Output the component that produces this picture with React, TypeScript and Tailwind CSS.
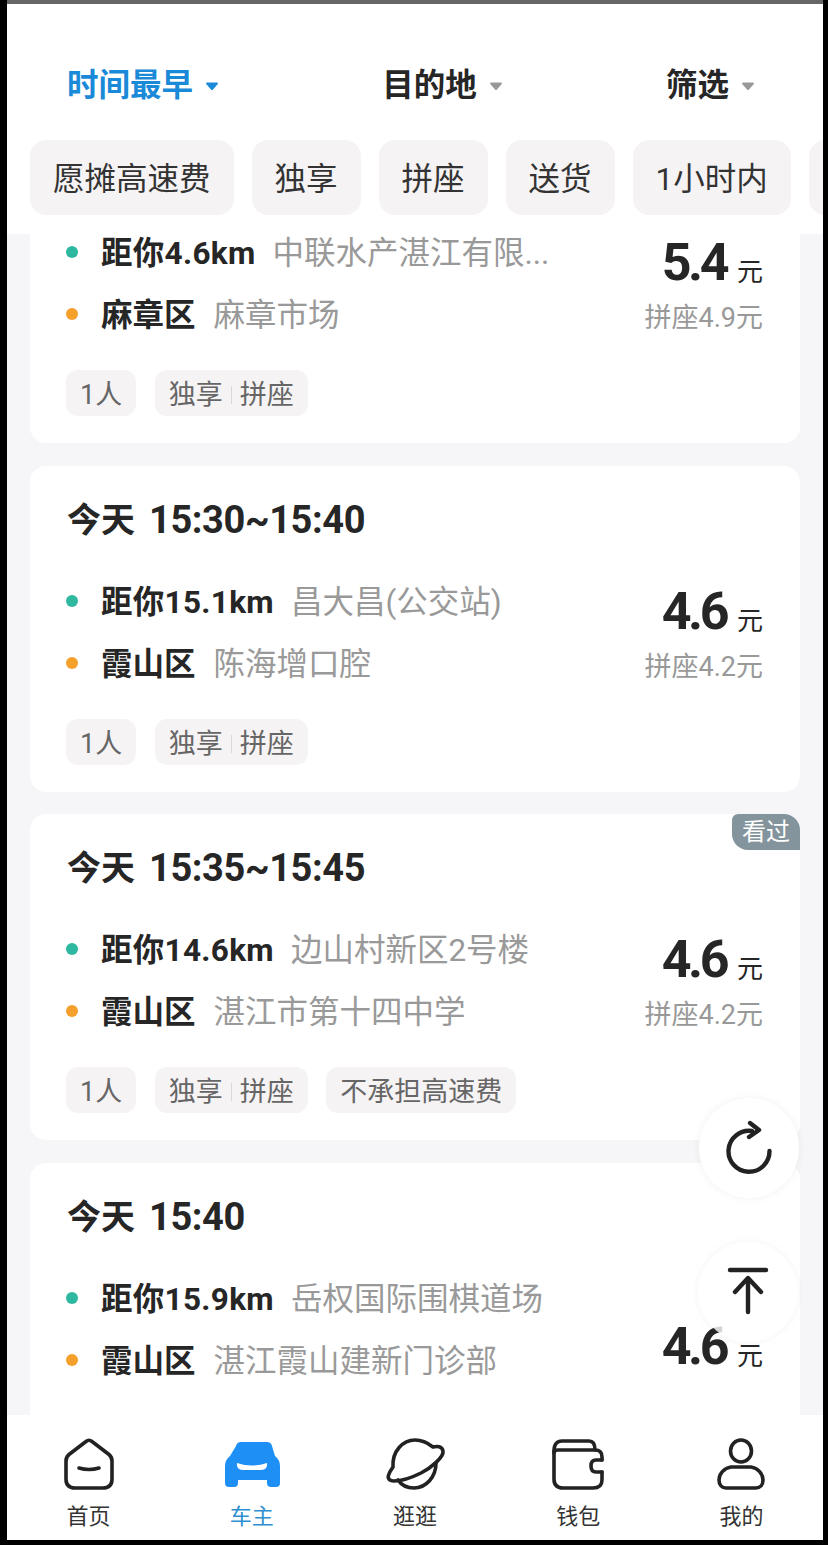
import type { ReactNode } from "react";

const font = "font-[Roboto,'Noto_Sans_CJK_SC',sans-serif]";

type Order = {
  id: number;
  clock?: string;
  distance: string;
  from: string;
  district: string;
  to: string;
  price: string;
  share?: string;
  seen?: boolean;
  extra?: string;
};

// the first card is scrolled under the header, so its time row is out of view
const orders: Order[] = [
  {
    id: 1,
    distance: "距你4.6km",
    from: "中联水产湛江有限...",
    district: "麻章区",
    to: "麻章市场",
    price: "5.4",
    share: "拼座4.9元",
  },
  {
    id: 2,
    clock: "15:30~15:40",
    distance: "距你15.1km",
    from: "昌大昌(公交站)",
    district: "霞山区",
    to: "陈海增口腔",
    price: "4.6",
    share: "拼座4.2元",
  },
  {
    id: 3,
    clock: "15:35~15:45",
    distance: "距你14.6km",
    from: "边山村新区2号楼",
    district: "霞山区",
    to: "湛江市第十四中学",
    price: "4.6",
    share: "拼座4.2元",
    seen: true,
    extra: "不承担高速费",
  },
  {
    id: 4,
    clock: "15:40",
    distance: "距你15.9km",
    from: "岳权国际围棋道场",
    district: "霞山区",
    to: "湛江霞山建新门诊部",
    price: "4.6",
  },
];

function Triangle({ className }: { className: string }) {
  return (
    <svg width="14" height="10" viewBox="0 0 14 10" className={className}>
      <path d="M2 1.5 H12 Q13.5 1.5 12.8 3 L8 8.5 Q7 9.5 6 8.5 L1.2 3 Q0.5 1.5 2 1.5Z" fill="currentColor" />
    </svg>
  );
}

function Tag({ children }: { children: ReactNode }) {
  return (
    <span className="flex h-[46px] items-center rounded-[12px] bg-[#f6f3f5] px-[14px] pt-[4px] text-[27px] leading-[34px] text-[#666666]">
      {children}
    </span>
  );
}

function OrderCard({ order }: { order: Order }) {
  return (
    <article className="relative h-[326px] shrink-0 overflow-hidden rounded-[16px] bg-white">
      {order.seen ? (
        <span className="absolute right-0 top-0 flex h-[36px] w-[68px] items-center justify-center rounded-bl-[16px] rounded-tl-[6px] bg-[#84949c] text-[24px] leading-[30px] text-white">
          看过
        </span>
      ) : null}
      <h2 className="mt-[34px] flex h-[40px] items-center pl-[37px] font-bold text-[#262626]">
        {order.clock ? (
          <>
            <span className="text-[34px] leading-[40px]">今天</span>
            <span className="ml-[14px] text-[38px] leading-[40px] tracking-[-0.4px]">{order.clock}</span>
          </>
        ) : null}
      </h2>
      <div className="mt-[30px] flex justify-between pr-[37px]">
        <div>
          <div className="flex h-[62px] items-center pl-[36px]">
            <span className="mr-[23px] h-[12px] w-[12px] rounded-full bg-[#2fb8a0]" />
            <span className="pt-[4px] text-[31.5px] font-bold leading-[46px] tracking-[0.3px] text-[#262626]">{order.distance}</span>
            <span className="ml-[17px] pt-[4px] text-[31.5px] leading-[46px] text-[#999999]">{order.from}</span>
          </div>
          <div className="flex h-[62px] items-center pl-[36px]">
            <span className="mr-[23px] h-[12px] w-[12px] rounded-full bg-[#f6a02c]" />
            <span className="pt-[4px] text-[31.5px] font-bold leading-[46px] text-[#262626]">{order.district}</span>
            <span className="ml-[18px] pt-[4px] text-[31.5px] leading-[46px] text-[#999999]">{order.to}</span>
          </div>
        </div>
        <div className={order.share ? "mt-[17px] text-right" : "mt-[55px] text-right"}>
          <div className="flex h-[50px] items-center justify-end text-[#262626]">
            <span className="text-[52px] font-bold leading-[50px] tracking-[-3.5px]">{order.price}</span>
            <span className="ml-[11px] mt-[18px] text-[26px] font-normal leading-[30px]">元</span>
          </div>
          {order.share ? (
            <div className="mt-[13px] text-[27px] leading-[34px] text-[#999999]">{order.share}</div>
          ) : null}
        </div>
      </div>
      <div className="mt-[25px] flex gap-[18.5px] pl-[36px]">
        <Tag>1人</Tag>
        <Tag>
          独享
          <span className="mx-[8px] h-[18px] w-px bg-[#d8d8d8]" />
          拼座
        </Tag>
        {order.extra ? <Tag>{order.extra}</Tag> : null}
      </div>
    </article>
  );
}

function HomeIcon() {
  return (
    <svg width="56" height="56" viewBox="0 0 56 56" fill="none" stroke="#222222" strokeWidth="3.6" strokeLinecap="round" strokeLinejoin="round">
      <path d="M25 4.5 L8 17.5 Q5 20 5 24 V42 Q5 51 14 51 H42 Q51 51 51 42 V24 Q51 20 48 17.5 L31 4.5 Q28 2 25 4.5Z" />
      <path d="M18 31 Q28 34 38 31" />
    </svg>
  );
}

function CarIcon() {
  return (
    <svg width="56" height="56" viewBox="0 0 56 56">
      <path d="M17 5 H43 Q47 5 48 9 L51 19 Q56 23 56 29 V46 Q56 50 52 50 H47 Q43 50 43 46 V43 H14 V46 Q14 50 10 50 H5 Q1 50 1 46 V29 Q1 23 6 19 L12 9 Q13 5 17 5Z" fill="#1e90f5" />
      <path d="M13 26 Q28 31 43 26 Q44 33 36 33 H20 Q12 33 13 26Z" fill="#ffffff" />
    </svg>
  );
}

function PlanetIcon() {
  return (
    <svg width="56" height="56" viewBox="0 0 56 56" fill="none" stroke="#222222" strokeWidth="3.6" strokeLinecap="round" strokeLinejoin="round" className="overflow-visible">
      <path d="M6 30 C5 14 16 3 28 3 C35 3 41 6 46 10 C50 9 55 9 56 14 C57 20 44 31 34 36 C24 41 13 44 7 44 C2 44 0 41 2 37 C3 34 5 32 6 30Z" />
      <path d="M11 43 C15 49 21 51 27 51 C39 51 49 40 49 26" />
    </svg>
  );
}

function WalletIcon() {
  return (
    <svg width="56" height="56" viewBox="0 0 56 56" fill="none" stroke="#222222" strokeWidth="3.6" strokeLinecap="round" strokeLinejoin="round">
      <path d="M4 14 C4 7 7 4 12 4 H39 C43 4 45 7 45 13" />
      <path d="M4 14 V42 Q4 51 13 51 H43 Q52 51 52 43 V35" />
      <path d="M52 23 V20 Q52 13 45 13 H8 Q4 13 4 16" />
      <path d="M52 23 H46 Q41 23 41 29 Q41 35 46 35 H52" />
    </svg>
  );
}

function PersonIcon() {
  return (
    <svg width="56" height="56" viewBox="0 0 56 56" fill="none" stroke="#222222" strokeWidth="3.6" strokeLinecap="round" strokeLinejoin="round">
      <ellipse cx="28" cy="14" rx="10.5" ry="11" />
      <path d="M18 30 H38 C45 31 50 37 50 43 C50 48 47 51 43 51 H13 C9 51 6 48 6 43 C6 37 11 31 18 30Z" />
    </svg>
  );
}

const navItems = [
  { label: "首页", icon: <HomeIcon />, active: false },
  { label: "车主", icon: <CarIcon />, active: true },
  { label: "逛逛", icon: <PlanetIcon />, active: false },
  { label: "钱包", icon: <WalletIcon />, active: false },
  { label: "我的", icon: <PersonIcon />, active: false },
];

const chips = ["愿摊高速费", "独享", "拼座", "送货", "1小时内"];

export default function App() {
  return (
    <div className={`relative flex h-[1545px] w-[828px] flex-col overflow-hidden bg-black pb-[5px] pl-[7px] pr-[5px] ${font}`}>
      <div className="h-[4px] shrink-0 bg-[#666666]" />
      <header className="h-[230px] shrink-0 bg-white">
        <div className="flex justify-between pl-[60px] pr-[68px] pt-[62px]">
          <button className="flex h-[40px] items-center gap-[12px] text-[31.5px] font-bold leading-[40px] text-[#1a8ad8]">
            时间最早
            <Triangle className="text-[#1a8ad8]" />
          </button>
          <button className="flex h-[40px] items-center gap-[12px] text-[31.5px] font-bold leading-[40px] text-[#262626]">
            目的地
            <Triangle className="text-[#999999]" />
          </button>
          <button className="flex h-[40px] items-center gap-[12px] text-[31.5px] font-bold leading-[40px] text-[#262626]">
            筛选
            <Triangle className="text-[#999999]" />
          </button>
        </div>
        <div className="mt-[34px] flex gap-[18px] overflow-hidden pl-[23px]">
          {chips.map((chip) => (
            <span
              key={chip}
              className="flex h-[75px] shrink-0 items-center rounded-[16px] bg-[#f6f3f5] px-[23px] pt-[4px] text-[31.5px] leading-[40px] text-[#333333]"
            >
              {chip}
            </span>
          ))}
          <span className="h-[75px] w-[100px] shrink-0 rounded-[16px] bg-[#f6f3f5]" />
        </div>
      </header>

      <main className="min-h-0 flex-1 overflow-hidden bg-[#f6f5f7] px-[23px]">
        <div className="-mt-[117px] flex flex-col gap-[22.5px]">
          {orders.map((order) => (
            <OrderCard key={order.id} order={order} />
          ))}
        </div>
      </main>

      <nav className="grid h-[125px] shrink-0 grid-cols-5 bg-white pt-[22px]">
        {navItems.map((item) => (
          <div key={item.label} className="flex flex-col items-center">
            {item.icon}
            <span className={`mt-[10px] text-[22px] leading-[28px] ${item.active ? "text-[#2f8fd0]" : "text-[#333333]"}`}>
              {item.label}
            </span>
          </div>
        ))}
      </nav>

      <button className="absolute left-[699px] top-[1098px] flex h-[100px] w-[100px] items-center justify-center rounded-full bg-white shadow-[0_0_8px_rgba(0,0,0,0.06)]">
        <svg width="56" height="56" viewBox="0 0 56 56" fill="none" stroke="#222222" strokeWidth="4.4" strokeLinecap="round" strokeLinejoin="round">
          <path d="M31 11 A20.5 20.5 0 1 0 48.5 31" />
          <path d="M29 3 L38 10 L28 17" />
        </svg>
      </button>
      <button className="absolute left-[698px] top-[1242px] flex h-[100px] w-[100px] items-center justify-center rounded-full bg-white/80 shadow-[0_0_8px_rgba(0,0,0,0.05)]">
        <svg width="56" height="56" viewBox="0 0 56 56" fill="none" stroke="#222222" strokeWidth="4.4" strokeLinecap="round" strokeLinejoin="round">
          <path d="M10 6 H46" />
          <path d="M15 28 L28 14 L41 28" />
          <path d="M28 15 V48" />
        </svg>
      </button>
    </div>
  );
}
